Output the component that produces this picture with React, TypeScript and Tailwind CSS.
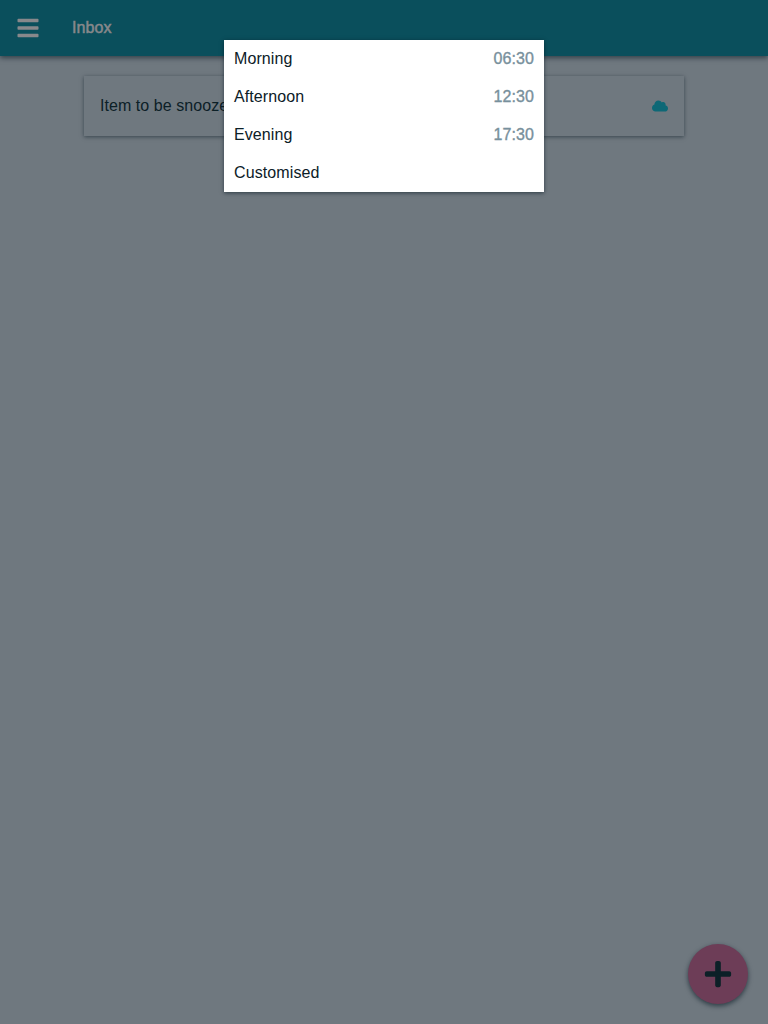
import { FaBars, FaCloud, FaPlus } from "react-icons/fa";

const options = [
  { label: "Morning", time: "06:30" },
  { label: "Afternoon", time: "12:30" },
  { label: "Evening", time: "17:30" },
  { label: "Customised", time: "" },
];

function Header() {
  return (
    <header className="relative flex h-14 items-center bg-[#0a4f5c] text-[#87888b] shadow-[0_2px_5px_rgba(0,20,30,0.55)]">
      <button aria-label="Menu" className="flex size-14 items-center justify-center">
        <FaBars className="size-6" />
      </button>
      <h1 className="ml-4 text-base leading-6 tracking-[0.1px] [-webkit-text-stroke:0.5px_currentColor]">Inbox</h1>
    </header>
  );
}

function SnoozeMenu() {
  return (
    <div className="absolute left-1/2 top-10 w-80 -translate-x-1/2 bg-white shadow-[0_1px_4px_rgba(0,20,30,0.6)]">
      {options.map((option) => (
        <button key={option.label} className="flex h-[38px] w-full items-center justify-between px-2.5 tracking-[0.1px]">
          <span>{option.label}</span>
          <span className="text-[#78909c] [-webkit-text-stroke:0.35px_currentColor]">{option.time}</span>
        </button>
      ))}
    </div>
  );
}

export default function App() {
  return (
    <div className="relative flex h-screen flex-col bg-[#6f787f] font-['Liberation_Sans',Arial,sans-serif] text-base text-[#0c2027]">
      <Header />
      <main className="mx-auto mt-5 w-[600px]">
        <div className="flex h-[60px] items-center justify-between bg-[#6f787f] px-4 shadow-[0_1px_4px_rgba(0,20,30,0.5)]">
          <span className="tracking-[0.06px]">Item to be snoozed</span>
          <FaCloud className="size-4 text-[#0e6876]" />
        </div>
      </main>
      <SnoozeMenu />
      <button
        aria-label="Add item"
        className="absolute bottom-5 right-5 flex size-[60px] items-center justify-center rounded-full bg-[#6d3d57] shadow-[0_2px_5px_rgba(0,20,30,0.6)]"
      >
        <FaPlus className="size-[30px]" />
      </button>
    </div>
  );
}
